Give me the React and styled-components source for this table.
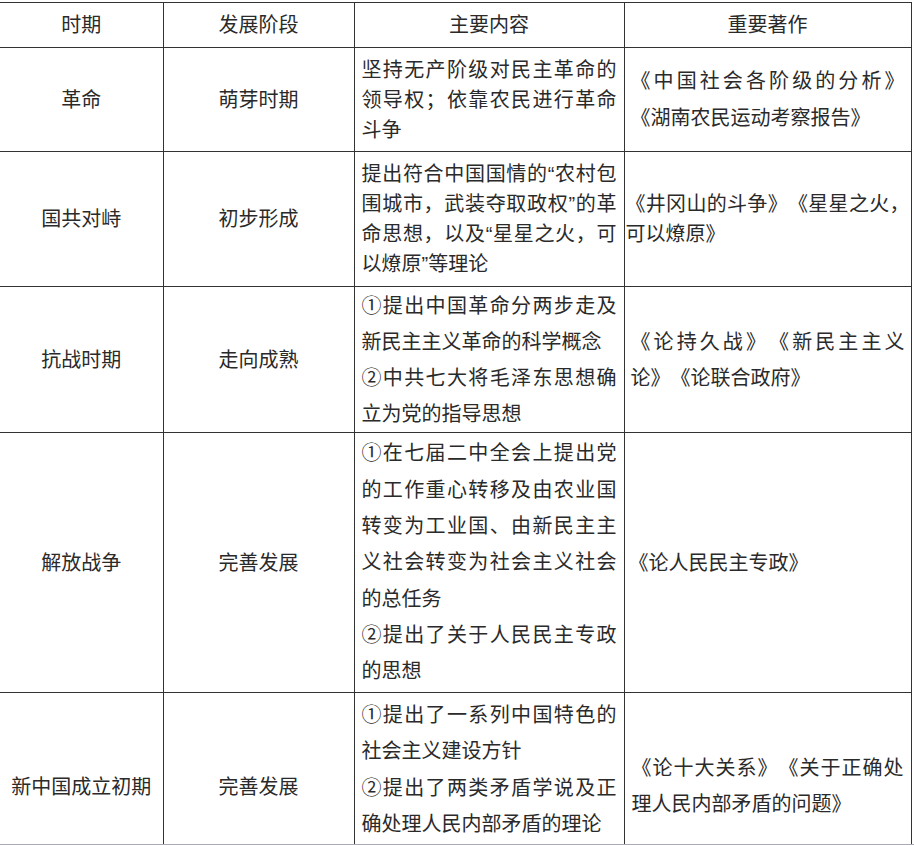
import React from "react";
import styled, { createGlobalStyle } from "styled-components";

const GlobalStyle = createGlobalStyle`
  html, body {
    margin: 0;
    padding: 0;
    background: #fff;
  }
  body {
    font-family: "Liberation Sans", "Noto Sans CJK SC", sans-serif;
    color: #2a2a2a;
  }
`;

// screenshot frame: the grey line at the bottom edge
const Page = styled.div`
  height: 845px;
  overflow: hidden;
  box-sizing: border-box;
  padding-top: 2px;
  border-bottom: 1px solid #a9a9b4;
`;

const Table = styled.table`
  width: 911px;
  border-collapse: collapse;
  table-layout: fixed;
  font-size: 20px;
  text-spacing-trim: space-all;
`;

const Col = styled.col`
  width: ${(p) => p.$w}px;
`;

const Row = styled.tr`
  height: ${(p) => p.$h}px;
`;

const HeadCell = styled.th`
  border: 1px solid #333;
  font-weight: normal;
  text-align: center;
  vertical-align: middle;
  padding: 0;
  line-height: 30px;

  &:first-child {
    border-left: none;
  }
`;

const Cell = styled.td`
  border: 1px solid #333;
  padding: ${(p) => (p.$valign === "top" ? "4px" : "0")} ${(p) => p.$pad ?? 0}px 0;
  vertical-align: ${(p) => p.$valign || "middle"};
  text-align: ${(p) => (p.$center ? "center" : "justify")};
  line-height: ${(p) => p.$lh || 30}px;
  word-break: normal;
  line-break: strict;

  &:first-child {
    border-left: none;
  }
`;

const Para = styled.div`
  margin: 0;
`;

const rows = [
  {
    period: "革命",
    stage: "萌芽时期",
    h: 104,
    content: { lh: 30, paras: ["坚持无产阶级对民主革命的领导权；依靠农民进行革命斗争"] },
    works: { lh: 37, pad: 6, text: "《中国社会各阶级的分析》《湖南农民运动考察报告》" },
  },
  {
    period: "国共对峙",
    stage: "初步形成",
    h: 135,
    content: {
      lh: 30,
      paras: ["提出符合中国国情的“农村包围城市，武装夺取政权”的革命思想，以及“星星之火，可以燎原”等理论"],
    },
    works: { lh: 30, pad: 1, text: "《井冈山的斗争》《星星之火，可以燎原》" },
  },
  {
    period: "抗战时期",
    stage: "走向成熟",
    h: 146,
    content: {
      lh: 36,
      paras: ["①提出中国革命分两步走及新民主主义革命的科学概念", "②中共七大将毛泽东思想确立为党的指导思想"],
    },
    works: { lh: 36, pad: 6, text: "《论持久战》《新民主主义论》《论联合政府》" },
  },
  {
    period: "解放战争",
    stage: "完善发展",
    h: 260,
    content: {
      lh: 36.3,
      paras: [
        "①在七届二中全会上提出党的工作重心转移及由农业国转变为工业国、由新民主主义社会转变为社会主义社会的总任务",
        "②提出了关于人民民主专政的思想",
      ],
    },
    works: { lh: 36, pad: 4, text: "《论人民民主专政》" },
  },
  {
    period: "新中国成立初期",
    stage: "完善发展",
    h: 188,
    content: {
      lh: 36.3,
      valign: "top",
      paras: ["①提出了一系列中国特色的社会主义建设方针", "②提出了两类矛盾学说及正确处理人民内部矛盾的理论"],
    },
    works: { lh: 35.5, pad: 7, text: "《论十大关系》《关于正确处理人民内部矛盾的问题》" },
  },
];

export default function App() {
  return (
    <>
      <GlobalStyle />
      <Page>
        <Table>
          <colgroup>
            <Col $w={163} />
            <Col $w={191} />
            <Col $w={270} />
            <Col $w={287} />
          </colgroup>
          <thead>
            <Row $h={45}>
              <HeadCell>时期</HeadCell>
              <HeadCell>发展阶段</HeadCell>
              <HeadCell>主要内容</HeadCell>
              <HeadCell>重要著作</HeadCell>
            </Row>
          </thead>
          <tbody>
            {rows.map((r) => (
              <Row key={r.period} $h={r.h}>
                <Cell $center>{r.period}</Cell>
                <Cell $center>{r.stage}</Cell>
                <Cell $lh={r.content.lh} $pad={7} $valign={r.content.valign}>
                  {r.content.paras.map((p) => (
                    <Para key={p}>{p}</Para>
                  ))}
                </Cell>
                <Cell $lh={r.works.lh} $pad={r.works.pad}>
                  {r.works.text}
                </Cell>
              </Row>
            ))}
          </tbody>
        </Table>
      </Page>
    </>
  );
}
